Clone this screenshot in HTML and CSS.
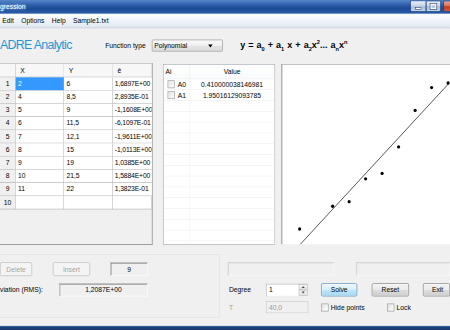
FILE: index.html
```html
<!DOCTYPE html>
<html>
<head>
<meta charset="utf-8">
<title>Regression</title>
<link rel="stylesheet" href="styles.css">
</head>
<body>
<div class="viewport">
<div class="app">
  <div class="titlebar">
    <span class="title">gression</span>
    <div class="winbtns">
      <div class="wb wb-min"><span class="glyph-min"></span></div>
      <div class="wb wb-max"><span class="glyph-max"></span></div>
      <div class="wb wb-close"></div>
    </div>
  </div>
  <div class="menubar">
    <span class="menu-item">Edit</span>
    <span class="menu-item">Options</span>
    <span class="menu-item">Help</span>
    <span class="menu-item">Sample1.txt</span>
  </div>
  <div class="toolbar">
    <span class="brand">ADRE Analytic</span>
    <span class="fn-label">Function type</span>
    <div class="combo"><span>Polynomial</span><span class="combo-arrow"></span></div>
    <div class="formula">y = a<sub>0</sub> + a<sub>1</sub> x + a<sub>2</sub>x<sup>2</sup>... a<sub>n</sub>x<sup>n</sup></div>
  </div>
  <div class="main">
    <div class="grid">
      <div class="sheet">
        <div class="cell corner"></div><div class="cell hd">X</div><div class="cell hd">Y</div><div class="cell hd">ê</div>
        <div class="cell rh">1</div><div class="cell sel">2</div><div class="cell">6</div><div class="cell err">1,6897E+00</div>
        <div class="cell rh">2</div><div class="cell">4</div><div class="cell">8,5</div><div class="cell err">2,8935E-01</div>
        <div class="cell rh">3</div><div class="cell">5</div><div class="cell">9</div><div class="cell err">-1,1608E+00</div>
        <div class="cell rh">4</div><div class="cell">6</div><div class="cell">11,5</div><div class="cell err">-6,1097E-01</div>
        <div class="cell rh">5</div><div class="cell">7</div><div class="cell">12,1</div><div class="cell err">-1,9611E+00</div>
        <div class="cell rh">6</div><div class="cell">8</div><div class="cell">15</div><div class="cell err">-1,0113E+00</div>
        <div class="cell rh">7</div><div class="cell">9</div><div class="cell">19</div><div class="cell err">1,0385E+00</div>
        <div class="cell rh">8</div><div class="cell">10</div><div class="cell">21,5</div><div class="cell err">1,5884E+00</div>
        <div class="cell rh">9</div><div class="cell">11</div><div class="cell">22</div><div class="cell err">1,3823E-01</div>
        <div class="cell rh">10</div><div class="cell"></div><div class="cell"></div><div class="cell"></div>
      </div>
    </div>
    <div class="coef">
      <div class="lv">
        <div class="lh lh-ai">Ai</div><div class="lh lh-val">Value</div>
        <div class="lc lc-name"><span class="chkbox"></span>A0</div><div class="lc lc-val">0.410000038146981</div>
        <div class="lc lc-name"><span class="chkbox"></span>A1</div><div class="lc lc-val">1.95016129093785</div>
        <div class="lc"></div><div class="lc"></div>
        <div class="lc"></div><div class="lc"></div>
        <div class="lc"></div><div class="lc"></div>
        <div class="lc"></div><div class="lc"></div>
        <div class="lc"></div><div class="lc"></div>
        <div class="lc"></div><div class="lc"></div>
        <div class="lc"></div><div class="lc"></div>
        <div class="lc"></div><div class="lc"></div>
        <div class="lc"></div><div class="lc"></div>
        <div class="lc"></div><div class="lc"></div>
        <div class="lc"></div><div class="lc"></div>
        <div class="lc"></div><div class="lc"></div>
        <div class="lc"></div><div class="lc"></div>
        <div class="lc"></div><div class="lc"></div>
      </div>
    </div>
    <div class="chart">
      <svg class="plot" width="308" height="299" viewBox="0 0 308 299">
        <line x1="32" y1="299" x2="295" y2="32" stroke="#303030" stroke-width="1.4"/>
        <g fill="#000">
          <circle cx="30.7" cy="273.7" r="2.8"/>
          <circle cx="89.3" cy="235.7" r="2.8"/>
          <circle cx="118.7" cy="228.1" r="2.8"/>
          <circle cx="148" cy="190.1" r="2.8"/>
          <circle cx="177.3" cy="181" r="2.8"/>
          <circle cx="206.6" cy="136.9" r="2.8"/>
          <circle cx="236" cy="76" r="2.8"/>
          <circle cx="265.3" cy="38" r="2.8"/>
          <circle cx="294.6" cy="30.4" r="2.8"/>
        </g>
      </svg>
    </div>
  </div>
  <div class="bottom">
    <div class="group-left">
      <div class="row row-top">
        <button class="btn btn-delete" disabled>Delete</button>
        <button class="btn btn-insert" disabled>Insert</button>
        <div class="readout count">9</div>
      </div>
      <div class="row row-mid">
        <span class="label rms-label">viation (RMS):</span>
        <div class="readout rms">1,2087E+00</div>
      </div>
    </div>
    <div class="group-right">
      <div class="row row-top">
        <div class="readout light wide1"></div>
        <div class="readout light wide2"></div>
      </div>
      <div class="row row-mid">
        <span class="label field-label">Degree</span>
        <div class="spin"><span class="spin-val">1</span><div class="spin-btns"><span class="spin-up"><i class="tri-up"></i></span><span class="spin-down"><i class="tri-down"></i></span></div></div>
        <button class="btn btn-focus btn-solve">Solve</button>
        <button class="btn btn-reset">Reset</button>
        <button class="btn btn-exit">Exit</button>
      </div>
      <div class="row row-low">
        <span class="label field-label dim">T</span>
        <div class="textbox disabled">40,0</div>
        <span class="chk chk-hide"><span class="chkbox"></span>Hide points</span>
        <span class="chk chk-lock"><span class="chkbox"></span>Lock</span>
      </div>
    </div>
  </div>
  <div class="taskbar"></div>
</div>
</div>
</body>
</html>
```
FILE: styles.css
```css
* { box-sizing: border-box; }
html, body { margin: 0; padding: 0; overflow: hidden; }
body { width: 450px; height: 330px; background: #f0f0f0; }

.viewport { width: 450px; height: 330px; overflow: hidden; }

.app {
  width: 800px;
  height: 550px;
  transform: scale(0.5625, 0.6);
  transform-origin: 0 0;
  display: flex;
  flex-direction: column;
  overflow: hidden;
  background: #f0f0f0;
  font-family: "Liberation Sans", Arial, sans-serif;
  font-size: 12px;
  color: #000;
}

/* title bar */
.titlebar {
  flex: none;
  height: 23px;
  display: flex;
  justify-content: space-between;
  align-items: flex-start;
  background: linear-gradient(180deg, #5787c8 0%, #2e60ab 35%, #1d4a95 60%, #2b5da9 100%);
}
.title {
  padding-top: 4px;
  line-height: 14px;
  color: #fff;
  text-shadow: 0 0 6px #a8c8f2, 0 0 3px #7aa3db;
}
.winbtns { display: flex; margin: 1px -31px 0 0; }
.wb {
  height: 19px;
  border: 1px solid #233e6e;
  display: flex;
  align-items: center;
  justify-content: center;
}
.wb-min {
  width: 28px;
  border-right: none;
  border-radius: 0 0 0 4px;
  background: linear-gradient(180deg, #eaf0f8 0%, #c6d5e8 45%, #a8bed9 55%, #c2d5ec 100%);
}
.wb-max {
  width: 27px;
  margin-right: 4px;
  border-radius: 0 0 4px 0;
  background: linear-gradient(180deg, #eaf0f8 0%, #c6d5e8 45%, #a8bed9 55%, #c2d5ec 100%);
}
.wb-close {
  width: 43px;
  border-radius: 0 0 4px 4px;
  background: linear-gradient(180deg, #eba796 0%, #d4705b 45%, #c23a1e 55%, #d65a3e 100%);
}
.glyph-min { width: 11px; height: 4px; margin-top: 7px; background: #fff; border: 1px solid #2d4266; }
.glyph-max { width: 11px; height: 9px; border: 2px solid #fff; outline: 1px solid #2d4266; }

/* menu */
.menubar {
  flex: none;
  height: 24px;
  display: flex;
  align-items: center;
  gap: 13px;
  padding-left: 4px;
  background: linear-gradient(180deg, #fdfeff 0%, #eef3f9 50%, #dfe8f4 100%);
  border-top: 1px solid #f6f9fd;
  border-bottom: 1px solid #b8c4d5;
}

/* toolbar */
.toolbar { flex: none; height: 58px; display: flex; align-items: center; }
.brand {
  flex: none;
  width: 187px;
  margin-top: -4px;
  font-size: 22px;
  letter-spacing: -1.2px;
  color: #1c98d8;
  white-space: nowrap;
}
.fn-label { flex: none; width: 83px; }
.combo {
  flex: none;
  width: 126px;
  height: 20px;
  margin-right: 31px;
  display: flex;
  align-items: center;
  justify-content: space-between;
  padding: 0 17px 0 3px;
  border: 1px solid #8a8a8a;
  border-radius: 2px;
  background: linear-gradient(180deg, #fafafa 0%, #f0f0f0 50%, #e4e4e4 51%, #dcdcdc 100%);
}
.combo-arrow {
  width: 0;
  height: 0;
  border-left: 4.5px solid transparent;
  border-right: 4.5px solid transparent;
  border-top: 5px solid #000;
}
.formula { flex: none; font-size: 16px; font-weight: bold; word-spacing: 1px; white-space: nowrap; }
.formula sub, .formula sup { font-size: 10px; }

/* main area */
.main { flex: none; height: 303px; display: flex; align-items: flex-start; }
.grid {
  flex: none;
  width: 271px;
  height: 303px;
  overflow: hidden;
  background: #f0f0f0;
  border-top: 1px solid #a0a0a0;
  border-right: 1px solid #6a6a6a;
  border-bottom: 1px solid #6a6a6a;
}
.sheet {
  display: grid;
  grid-template-columns: 28px 86px 87px 69px;
  grid-template-rows: 23px;
  grid-auto-rows: 22px;
  width: 270px;
}
.cell {
  background: #fff;
  border-right: 1px solid #acacac;
  border-bottom: 1px solid #acacac;
  padding-left: 4px;
  line-height: 21px;
  white-space: nowrap;
  overflow: hidden;
}
.err { border-right: none; letter-spacing: -0.2px; padding-left: 3px; }
.hd {
  background: #f7f7f7;
  padding-left: 8px;
  line-height: 22px;
  border-right-color: #d2d2d2;
  border-bottom-color: #a0a0a0;
}
.corner { background: #f7f7f7; border-bottom-color: #a0a0a0; }
.rh { background: #f0f0f0; text-align: center; padding-left: 0; }
.sel { background: #3399ff; color: #fff; }

/* coefficient list */
.coef {
  flex: none;
  width: 199px;
  height: 301px;
  margin: 2px 11px 0 19px;
  overflow: hidden;
  background: #fff;
  border: 1px solid #9a9fa8;
}
.lv {
  display: grid;
  grid-template-columns: 47px 150px;
  grid-template-rows: 24px;
  grid-auto-rows: 18px;
}
.lh {
  line-height: 23px;
  border-right: 1px solid #e3e3e3;
  border-bottom: 1px solid #ececec;
  background: linear-gradient(180deg, #ffffff 0%, #f9fafb 100%);
}
.lh-ai { padding-left: 3px; }
.lh-val { text-align: center; }
.lc {
  display: flex;
  align-items: center;
  border-right: 1px solid #efefef;
  border-bottom: 1px solid #efefef;
}
.lc-name { padding-left: 7px; gap: 5px; }
.lc-val { justify-content: center; }

.chkbox {
  flex: none;
  display: inline-block;
  width: 13px;
  height: 13px;
  border: 1px solid #8e8f8f;
  background: linear-gradient(135deg, #dcdcdc 0%, #f4f4f4 60%, #ffffff 100%);
  box-shadow: inset 0 0 0 1px #f4f4f4;
}

/* chart */
.chart {
  flex: none;
  width: 310px;
  height: 300px;
  margin-top: 2px;
  background: #fff;
  border-left: 2px solid #9b9b9b;
  border-top: 1px solid #9b9b9b;
}
.plot { display: block; }

/* bottom controls */
.bottom { flex: none; height: 134px; padding-top: 15px; display: flex; align-items: flex-start; }
.group-left {
  flex: none;
  width: 391px;
  height: 107px;
  padding-top: 13px;
  border: 1px solid #d5dfe5;
  border-left: none;
  border-radius: 0 4px 4px 0;
}
.group-right { flex: none; width: 400px; margin-left: 9px; padding: 14px 0 0 5px; overflow: hidden; }
.row { display: flex; align-items: center; }
.row-top { height: 23px; }
.row-mid { height: 22px; margin-top: 12px; }
.row-low { height: 20px; margin-top: 8px; }

.btn {
  flex: none;
  height: 22px;
  padding: 0;
  font: inherit;
  color: #000;
  border: 1px solid #707070;
  border-radius: 3px;
  background: linear-gradient(180deg, #f2f2f2 0%, #ebebeb 49%, #dddddd 50%, #cfcfcf 100%);
  box-shadow: inset 0 0 0 1px #fbfbfb;
}
.btn:disabled {
  color: #a3a3a3;
  border-color: #adb2b5;
  background: #f4f4f4;
  box-shadow: none;
}
.btn-focus {
  border-color: #3c7fb1;
  background: linear-gradient(180deg, #eaf6fd 0%, #d9f0fc 49%, #bee6fd 50%, #a7d9f5 100%);
}
.btn-delete { width: 57px; height: 23px; }
.btn-insert { width: 66px; height: 23px; margin-left: 37px; }
.btn-solve { width: 64px; margin-left: 23px; }
.btn-reset { width: 66px; margin-left: 26px; }
.btn-exit { width: 48px; margin-left: 25px; text-align: center; padding-left: 4px; }

.readout {
  flex: none;
  height: 23px;
  display: flex;
  align-items: center;
  justify-content: center;
  background: #f0f0f0;
  border: 1px solid;
  border-color: #a0a0a0 #ffffff #ffffff #a0a0a0;
  box-shadow: inset 1px 1px 0 #6d6d6d;
}
.readout.light { border-color: #c6c6c6 #f8f8f8 #f8f8f8 #c6c6c6; box-shadow: inset 1px 1px 0 #dadada; }
.count { width: 67px; margin-left: 36px; }
.rms { width: 158px; height: 22px; }
.wide1 { width: 189px; }
.wide2 { width: 167px; margin-left: 39px; }

.label { flex: none; white-space: nowrap; }
.rms-label { width: 105px; }
.field-label { width: 68px; padding-left: 2px; }
.dim { color: #a0a0a0; }

.spin {
  flex: none;
  width: 75px;
  height: 21px;
  display: flex;
  background: #fff;
  border: 1px solid #abadb3;
  border-bottom-color: #e3e9ef;
  border-right-color: #dbdfe6;
}
.spin-val { flex: 1; padding-left: 4px; line-height: 19px; }
.spin-btns { flex: none; width: 16px; display: flex; flex-direction: column; }
.spin-up, .spin-down {
  flex: 1;
  display: flex;
  align-items: center;
  justify-content: center;
  background: linear-gradient(180deg, #f5f5f5, #e2e2e2);
  border: 1px solid #b5b5b5;
}
.tri-up { width: 0; height: 0; border-left: 3px solid transparent; border-right: 3px solid transparent; border-bottom: 3px solid #4d4d4d; }
.tri-down { width: 0; height: 0; border-left: 3px solid transparent; border-right: 3px solid transparent; border-top: 3px solid #4d4d4d; }

.textbox {
  flex: none;
  width: 75px;
  height: 20px;
  padding-left: 4px;
  line-height: 18px;
  border: 1px solid #c9c9c9;
}
.textbox.disabled { background: #f0f0f0; color: #9a9a9a; }

.chk { flex: none; display: flex; align-items: center; gap: 4px; white-space: nowrap; }
.chk-hide { width: 117px; margin-left: 23px; }

.taskbar {
  flex: none;
  height: 8px;
  border-top: 1px solid #dfe6ef;
  background: linear-gradient(180deg, #3c6cb2 0%, #1c417f 40%, #16346a 100%);
}
```
